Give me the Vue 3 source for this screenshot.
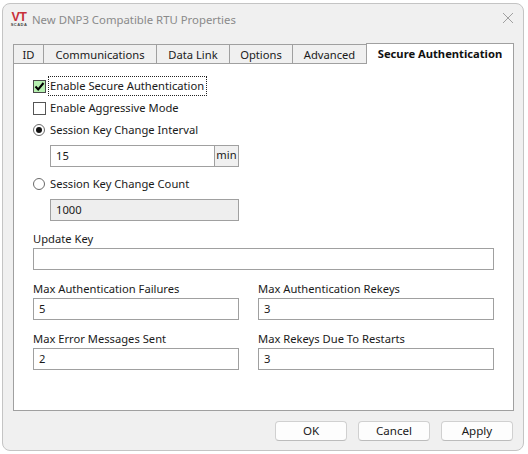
<template>
  <div class="window">
    <div class="titlebar">
      <div class="logo">
        <span class="logo-mark">VT</span>
        <span class="logo-sub">SCADA</span>
      </div>
      <span class="title">New DNP3 Compatible RTU Properties</span>
      <svg class="close" width="12" height="12" viewBox="0 0 12 12">
        <path d="M1 1L11 11M11 1L1 11" stroke="#a0a0a0" stroke-width="1" fill="none" />
      </svg>
    </div>

    <div class="tabs">
      <div
        v-for="tab in tabs"
        :key="tab.name"
        class="tab"
        :class="{ active: tab.active }"
        :style="{ width: tab.width + 'px' }"
      >
        {{ tab.name }}
      </div>
    </div>

    <div class="panel">
      <div class="check-row">
        <span class="checkbox on">
          <svg width="11" height="11" viewBox="0 0 11 11">
            <path d="M1.5 5.5L4.2 8.5L9.5 2" stroke="#000" stroke-width="2" fill="none" />
          </svg>
        </span>
        <span class="focused">Enable Secure Authentication</span>
      </div>
      <div class="check-row">
        <span class="checkbox"></span>
        <span class="plain text">Enable Aggressive Mode</span>
      </div>
      <div class="radio-row">
        <span class="radio on"></span>
        <span class="text">Session Key Change Interval</span>
      </div>
      <div class="indent">
        <div class="field unit-field">
          <span class="value">15</span>
          <span class="unit">min</span>
        </div>
      </div>
      <div class="radio-row second">
        <span class="radio"></span>
        <span class="text">Session Key Change Count</span>
      </div>
      <div class="indent">
        <div class="field disabled"><span class="value">1000</span></div>
      </div>

      <label class="label update">Update Key</label>
      <div class="field"></div>

      <div class="grid">
        <div v-for="item in limits" :key="item.label" class="cell">
          <label class="label">{{ item.label }}</label>
          <div class="field"><span class="value">{{ item.value }}</span></div>
        </div>
      </div>
    </div>

    <div class="buttons">
      <button class="btn">OK</button>
      <button class="btn">Cancel</button>
      <button class="btn">Apply</button>
    </div>
  </div>
</template>

<script setup>
const tabs = [
  { name: "ID", width: 31 },
  { name: "Communications", width: 114 },
  { name: "Data Link", width: 74 },
  { name: "Options", width: 64 },
  { name: "Advanced", width: 75 },
  { name: "Secure Authentication", width: 148, active: true },
];

const limits = [
  { label: "Max Authentication Failures", value: "5" },
  { label: "Max Authentication Rekeys", value: "3" },
  { label: "Max Error Messages Sent", value: "2" },
  { label: "Max Rekeys Due To Restarts", value: "3" },
];
</script>

<style>
html,
body {
  margin: 0;
  background: #ffffff;
}
</style>

<style scoped>
.window {
  box-sizing: border-box;
  width: 522px;
  height: 448px;
  margin: 3px 0 0 2px;
  padding: 0 9px 0 10px;
  background: #f0f0f0;
  border: 1px solid #c4c4c4;
  border-radius: 8px;
  font-family: "Noto Sans", sans-serif;
  font-size: 11.2px;
  color: #1a1a1a;
}

.titlebar {
  display: flex;
  align-items: center;
  height: 31px;
}

.logo {
  display: flex;
  flex-direction: column;
  align-items: center;
  width: 16px;
  margin-left: -2px;
}

.logo-mark {
  height: 9px;
  color: #c8303a;
  font-family: "Liberation Sans", sans-serif;
  font-size: 12.5px;
  font-weight: 700;
  letter-spacing: -0.5px;
  line-height: 9px;
}

.logo-sub {
  height: 4px;
  margin-top: 1px;
  color: #444;
  font-family: "Liberation Sans", sans-serif;
  font-size: 4px;
  font-weight: 700;
  letter-spacing: 0.5px;
  line-height: 4px;
}

.title {
  margin-left: 5px;
  color: #8a8a8a;
  font-size: 11.35px;
}

.close {
  margin-left: auto;
  margin-bottom: 3px;
}

.tabs {
  display: flex;
  align-items: flex-end;
  height: 19px;
  margin-top: 9px;
  position: relative;
  z-index: 1;
}

.tab {
  box-sizing: border-box;
  height: 20px;
  margin-right: -1px;
  margin-bottom: -1px;
  border: 1px solid #a0a0a0;
  text-align: center;
  line-height: 20px;
  background: #f0f0f0;
}

.tab.active {
  height: 21px;
  margin-bottom: -1px;
  margin-right: 0;
  background: #fff;
  border-bottom: 0;
  font-weight: 700;
  color: #111;
}

.panel {
  box-sizing: border-box;
  height: 348px;
  padding: 11px 19px 0;
  background: #fff;
  border: 1px solid #a0a0a0;
}

.check-row,
.radio-row {
  display: flex;
  align-items: center;
  height: 22px;
}

.text {
  margin-bottom: 2px;
}

.checkbox {
  display: flex;
  align-items: center;
  justify-content: center;
  box-sizing: border-box;
  width: 13px;
  height: 13px;
  margin-right: 2px;
  border: 1px solid #555;
  background: #fff;
}

.checkbox.on {
  background: #b6f0b0;
  border-color: #4a4a4a;
}

.focused {
  padding: 0 2px 0 1px;
  line-height: 18px;
  border: 1px dotted #222;
}

.plain {
  margin-left: 2px;
}

.radio {
  position: relative;
  box-sizing: border-box;
  width: 12px;
  height: 12px;
  margin-right: 5px;
  border: 1px solid #6a6a6a;
  border-radius: 50%;
}

.radio.on::after {
  content: "";
  position: absolute;
  top: 2px;
  left: 2px;
  width: 6px;
  height: 6px;
  border-radius: 50%;
  background: #111;
}

.indent {
  width: 189px;
  margin: 4px 0 0 17px;
}

.radio-row.second {
  margin-top: 6px;
}

.field {
  box-sizing: border-box;
  display: flex;
  align-items: center;
  height: 22px;
  border: 1px solid #a0a0a0;
  background: #fff;
}

.field.disabled {
  background: #eeeeee;
}

.value {
  padding-left: 5px;
  margin-bottom: 2px;
}

.unit-field {
  justify-content: space-between;
}

.unit {
  box-sizing: border-box;
  width: 24px;
  height: 100%;
  border-left: 1px solid #a0a0a0;
  background: #f0f0f0;
  text-align: center;
  line-height: 18px;
}

.label {
  display: block;
  height: 17px;
  line-height: 15px;
}

.label.update {
  margin-top: 10px;
}

.grid {
  display: grid;
  grid-template-columns: 206px 236px;
  column-gap: 19px;
  row-gap: 11px;
  margin-top: 11px;
}

.buttons {
  display: flex;
  justify-content: flex-end;
  gap: 11px;
  margin: 10px 1px 0 0;
}

.btn {
  box-sizing: border-box;
  width: 72px;
  height: 20px;
  padding: 0 0 2px;
  border: 1px solid #d0d0d0;
  border-bottom-color: #bcbcbc;
  border-radius: 4px;
  background: #fdfdfd;
  color: #1a1a1a;
  font-family: inherit;
  font-size: 11.6px;
}
</style>
